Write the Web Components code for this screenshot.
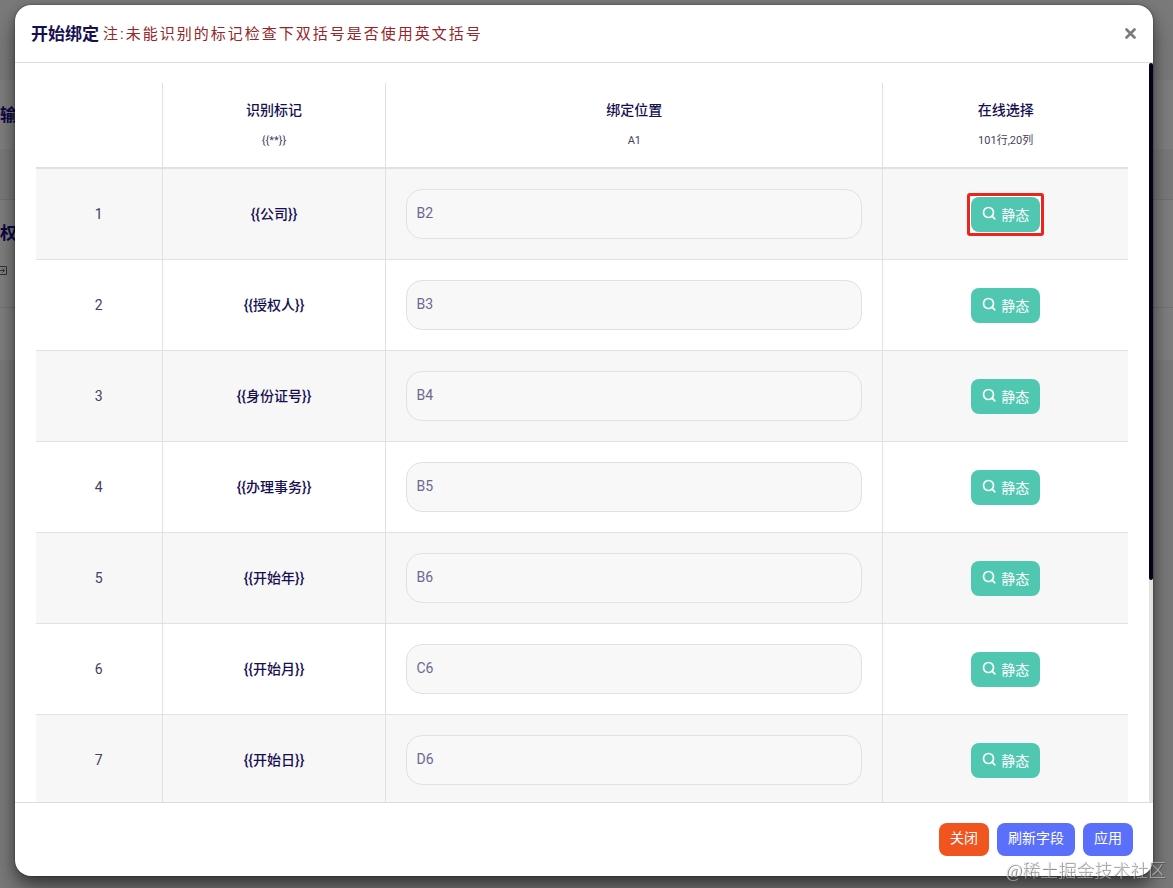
<!DOCTYPE html>
<html lang="zh-CN">
<head>
<meta charset="utf-8">
<title>开始绑定</title>
<style>
html, body { height: 100%; }
body { margin: 0; overflow: hidden; background: #7c7c7c; color: #160f52; font-family: Roboto, "Noto Sans CJK SC", sans-serif; font-size: 14px; }
</style>
</head>
<body>
<page-backdrop></page-backdrop>
<bind-dialog>
  <span slot="title">开始绑定</span>
  <span slot="note">注:未能识别的标记检查下双括号是否使用英文括号</span>
  <bind-table></bind-table>
  <action-button slot="actions" tone="danger">关闭</action-button>
  <action-button slot="actions">刷新字段</action-button>
  <action-button slot="actions">应用</action-button>
</bind-dialog>
<water-mark>@稀土掘金技术社区</water-mark>
<script>
class Base extends HTMLElement {
  constructor() {
    super();
    this.attachShadow({ mode: 'open' }).innerHTML = this.constructor.html;
  }
}

customElements.define('page-backdrop', class extends Base {
  static html = `<style>
    :host { position: fixed; inset: 0; overflow: hidden; display: flex; flex-direction: column; background: #7f7f7f; }
    header { height: 80px; background: #7a7a7a; }
    h2 { margin: 0; height: 69px; font-size: 17px; line-height: 70px; white-space: nowrap; color: #0d0846; }
    .band { height: 50px; background: #7a7a7a; border-bottom: 1px solid #727272; }
    .card { height: 107px; border-bottom: 1px solid #727272; }
    .card h2 { height: 64px; line-height: 66px; }
    .gap { height: 52px; }
    .rest { flex: 1; background: #7a7a7a; }
    svg { display: block; width: 8px; height: 12px; }
  </style>
  <header></header><h2>输</h2><div class="band"></div>
  <div class="card"><h2>权</h2><svg viewBox="0 0 8 12" fill="none" stroke="#333" stroke-width="1"><path d="M0 2.500h6.500v8H0M0 6.500h4M2.500 4.500l2 2-2 2"/></svg></div>
  <div class="gap"></div><div class="rest"></div>`;
});

customElements.define('bind-dialog', class extends Base {
  static html = `<style>
    :host { position: fixed; inset: 0; box-sizing: border-box; padding: 5px 20px 12px 15px; display: flex; }
    section { flex: 1; min-width: 0; display: flex; flex-direction: column; background: #fff; border-radius: 16px; overflow: hidden; box-shadow: 0 11px 15px -7px rgba(0,0,0,.3), 0 16px 24px 2px rgba(0,0,0,.25), 0 4px 12px 2px rgba(0,0,0,.2), 0 0 2px rgba(0,0,0,.5); }
    header { display: flex; align-items: center; height: 57px; border-bottom: 1px solid #dedddb; padding: 0 16px; flex: none; }
    h1 { margin: 0 4px 0 0; font-size: 17px; line-height: 24px; font-weight: 700; }
    p { margin: 0; flex: 1; font-size: 15px; line-height: 24px; letter-spacing: 2px; color: #96262a; }
    .close { border: 0; background: none; padding: 0; width: 13px; height: 24px; display: grid; place-items: center; }
    .close svg { width: 11px; height: 11px; }
    .middle { flex: 1; min-height: 0; display: flex; }
    .scroll { flex: 1; overflow: auto; scrollbar-width: none; padding: 20px 21px; }
    .track { width: 4px; background: #e4e2df; }
    .thumb { height: 70%; background: #04031d; border-radius: 2px; }
    footer { flex: none; display: flex; justify-content: flex-end; gap: 8px; padding: 20px; border-top: 1px solid #dcdcdc; }
  </style>
  <section role="dialog" aria-labelledby="t">
    <header><h1 id="t"><slot name="title"></slot></h1><p><slot name="note"></slot></p>
    <button class="close" aria-label="关闭窗口"><svg viewBox="0 0 11 11"><path d="M1.500 1.500l8 8M9.500 1.500l-8 8" stroke="#7b7b7b" stroke-width="2.600" stroke-linecap="round"/></svg></button></header>
    <div class="middle"><div class="scroll"><slot></slot></div><div class="track"><div class="thumb"></div></div></div>
    <footer><slot name="actions"></slot></footer>
  </section>`;
});

customElements.define('action-button', class extends Base {
  static html = `<style>
    :host { display: block; --bg: #5a70fb; }
    :host([tone=danger]) { --bg: #f0541f; }
    button { display: block; border: 0; border-radius: 8px; height: 33px; padding: 0 11px 2px; background: var(--bg); color: #fff; font: inherit; font-size: 14px; line-height: 31px; white-space: nowrap; }
  </style><button type="button"><slot></slot></button>`;
});

customElements.define('pick-button', class extends Base {
  static html = `<style>
    :host { display: inline-block; vertical-align: middle; padding: 1px; border: 3px solid transparent; border-radius: 3px; }
    :host([marked]) { border-color: #ee231c; background: #fff; }
    button { display: flex; align-items: center; gap: 4px; border: 0; border-radius: 8px; height: 35px; padding: 0 11px; background: #50c7b0; color: #fff; font: inherit; font-size: 14px; line-height: 20px; white-space: nowrap; }
    svg { width: 15px; height: 15px; margin-bottom: 2px; }
    span { margin-top: 1px; }
  </style><button type="button"><svg viewBox="0 0 15 15" fill="none" stroke="#fff" stroke-width="1.700" stroke-linecap="round"><circle cx="6.500" cy="6.500" r="5"/><path d="M10.200 10.200l2.600 2.600"/></svg><span><slot></slot></span></button>`;
});

customElements.define('bind-table', class extends HTMLElement {
  constructor() {
    super();
    const rows = [['公司', 'B2'], ['授权人', 'B3'], ['身份证号', 'B4'], ['办理事务', 'B5'], ['开始年', 'B6'], ['开始月', 'C6'], ['开始日', 'D6']];
    this.attachShadow({ mode: 'open' }).innerHTML = `<style>
    :host { display: block; }
    table { width: 100%; table-layout: fixed; border-collapse: separate; border-spacing: 0; text-align: center; font-size: 14px; line-height: 20px; }
    .c1 { width: 11.5%; } .c2 { width: 20.5%; } .c3 { width: 45.5%; }
    th, td { box-sizing: border-box; padding: 0 20px; border-bottom: 1px solid #e2e1df; vertical-align: middle; }
    th + th, th + td, td + th, td + td { border-left: 1px solid #e2e1df; }
    thead th { height: 86px; border-bottom-width: 2px; font-weight: 500; }
    tbody td, tbody th { height: 91px; }
    tbody th { font-weight: 500; }
    tbody tr:nth-child(odd) { background: #f7f7f7; }
    td:first-child, small { color: #45415f; }
    small { display: block; margin-top: 10px; font-size: 11px; line-height: 21px; font-weight: 400; }
    input { display: block; box-sizing: border-box; width: 100%; height: 50px; padding: 0 9px 2px; border: 1px solid #e2e1df; border-radius: 16px; background: #f8f8f8; color: #6b6890; font: inherit; }
    </style>
    <table><colgroup><col class="c1"><col class="c2"><col class="c3"><col></colgroup>
    <thead><tr><th></th><th>识别标记<small>{{**}}</small></th><th>绑定位置<small>A1</small></th><th>在线选择<small>101行,20列</small></th></tr></thead>
    <tbody>${rows.map(([n, v], i) => `<tr><td>${i + 1}</td><th scope="row"><label for="f${i}">{{${n}}}</label></th><td><input id="f${i}" value="${v}" readonly></td><td><pick-button${i ? '' : ' marked'}>静态</pick-button></td></tr>`).join('')}</tbody></table>`;
  }
});

customElements.define('water-mark', class extends Base {
  static html = `<style>
    :host { position: fixed; right: 7px; bottom: 5px; font-family: "Liberation Serif", "Noto Sans CJK SC", serif; font-weight: 300; font-size: 18px; line-height: 24px; color: rgba(225,225,225,.6); text-shadow: 1px 1px 0 rgba(70,70,70,.6); pointer-events: none; white-space: nowrap; }
  </style><slot></slot>`;
});
</script>
</body>
</html>
